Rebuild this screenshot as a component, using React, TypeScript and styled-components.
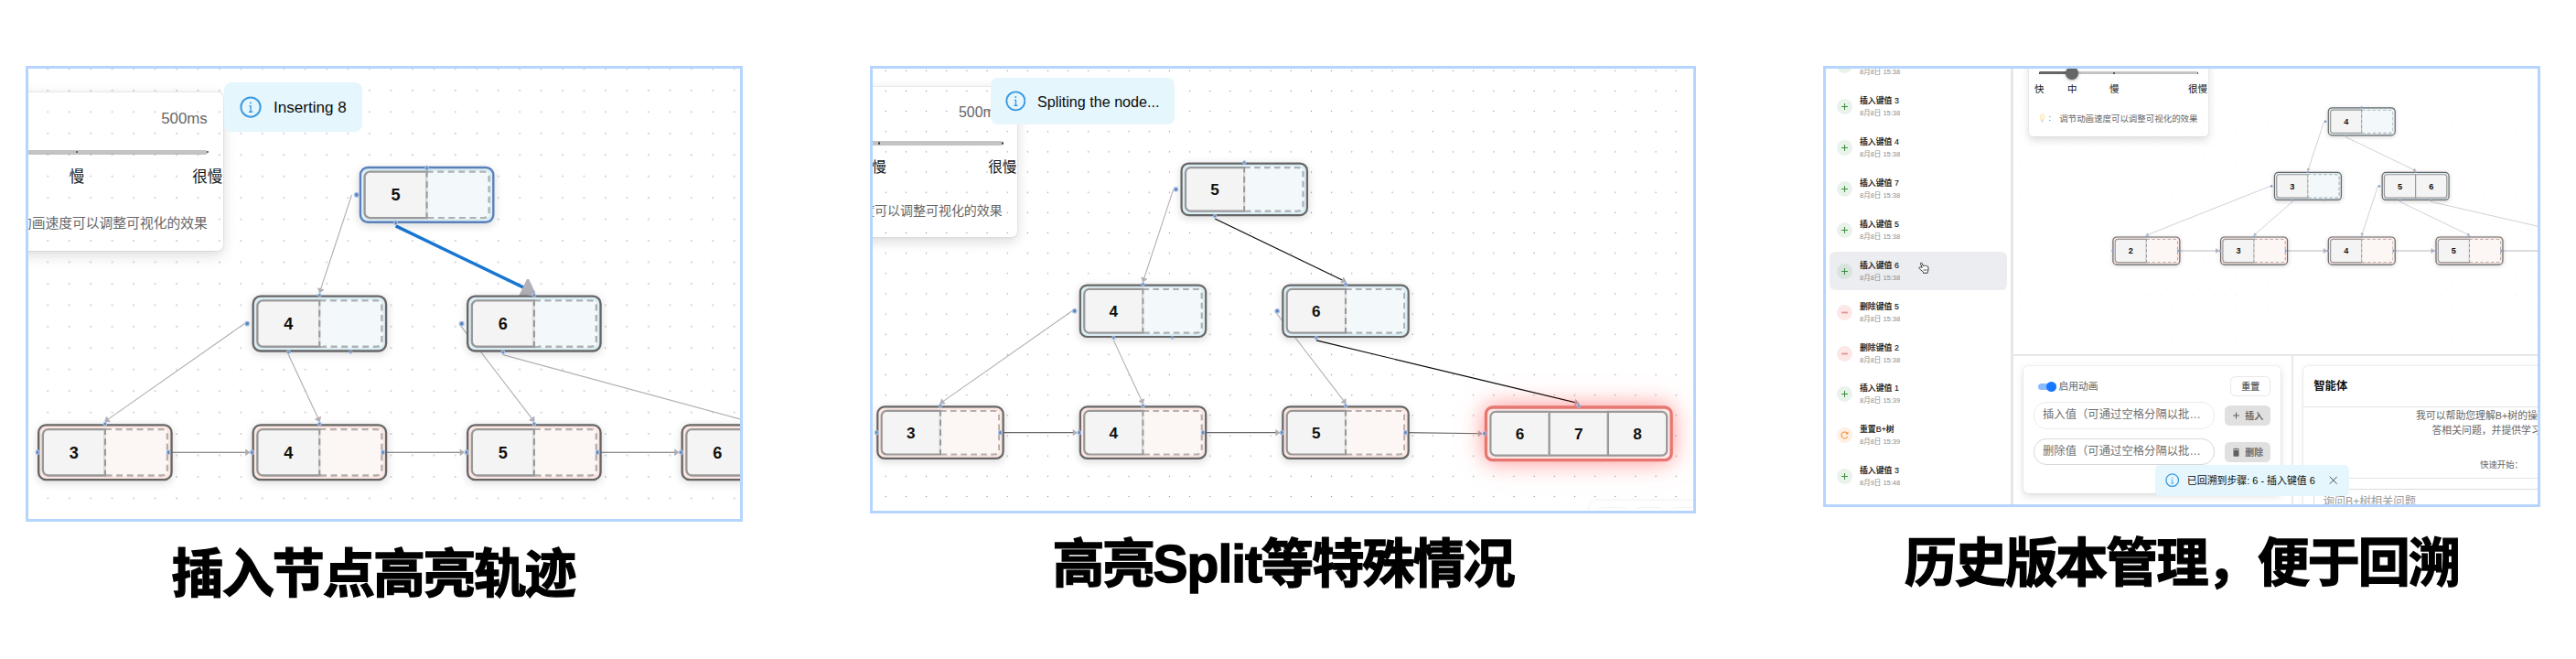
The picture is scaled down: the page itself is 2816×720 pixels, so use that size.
import React from "react";
import styled, { createGlobalStyle, css } from "styled-components";

const GlobalStyle = createGlobalStyle`
  *, *::before, *::after { box-sizing: border-box; }
  body {
    margin: 0;
    background: #fff;
    font-family: "Liberation Sans", "Noto Sans CJK SC", sans-serif;
    color: #111;
  }
`;

/* ---------- page ---------- */

const Page = styled.main`
  display: flex;
  align-items: flex-start;
  gap: 139px;
  width: 2816px;
  height: 720px;
  padding: 72px 0 0 28px;
  overflow: hidden;
  background: #fff;
`;

const Figure = styled.figure`
  display: flex;
  flex-direction: column;
  margin: 0;
`;

const Frame = styled.div<{ $w: number; $h: number }>`
  position: relative;
  width: ${(p) => p.$w}px;
  height: ${(p) => p.$h}px;
  border: 3px solid #b5d5ff;
  background: #fff;
  overflow: hidden;
`;

const Caption = styled.figcaption<{ $shift?: number; $top: number }>`
  margin-top: ${(p) => p.$top}px;
  padding-right: ${(p) => p.$shift ?? 0}px;
  text-align: center;
  white-space: nowrap;
  font-size: 57px;
  line-height: 80px;
  font-weight: 700;
  letter-spacing: -1.9px;
  color: #000;
  -webkit-text-stroke: 1.4px #000;
`;

const Latin = styled.span`
  letter-spacing: -1px;
`;

/* ---------- tree canvas ---------- */

const Canvas = styled.div`
  position: relative;
  width: 100%;
  height: 100%;
  overflow: hidden;
`;

const Layer = styled.svg`
  position: absolute;
  inset: 0;
  width: 100%;
  height: 100%;
`;

const Viewport = styled.div<{ $x: number; $y: number; $zoom: number }>`
  position: absolute;
  left: 0;
  top: 0;
  transform-origin: 0 0;
  transform: translate(${(p) => p.$x}px, ${(p) => p.$y}px) scale(${(p) => p.$zoom});
`;

const EdgeLayer = styled.svg`
  position: absolute;
  left: 0;
  top: 0;
  width: 1px;
  height: 1px;
  overflow: visible;
`;

type Kind = "internal" | "leaf";
type Mark = "selected" | "alert";

const NodeBox = styled.div<{ $x: number; $y: number; $kind: Kind; $mark?: Mark }>`
  position: absolute;
  left: ${(p) => p.$x}px;
  top: ${(p) => p.$y}px;
  display: flex;
  padding: 2px;
  border: 2px solid #666;
  border-radius: 8px;
  background: ${(p) => (p.$kind === "leaf" ? "#fce6e1" : "#dceef5")};
  box-shadow: 0 2px 8px rgba(0, 0, 0, 0.14);
  ${(p) => p.$mark === "selected" && css`border-color: #5a80ba;`}
  ${(p) =>
    p.$mark === "alert" &&
    css`
      border: 3px solid #e57670;
      background: #ffe6e6;
      box-shadow: 0 0 20px rgba(255, 0, 0, 0.33), 0 0 34px rgba(255, 90, 80, 0.2);
    `}
`;

const Cell = styled.div<{ $empty: boolean }>`
  display: flex;
  align-items: center;
  justify-content: center;
  width: 60px;
  height: 45px;
  border: 2px solid #999;
  background: #f4f4f4;
  font-size: 15.5px;
  font-weight: 700;
  color: #111;
  &:not(:first-child) { margin-left: -2px; }
  &:first-child { border-radius: 6px 0 0 6px; }
  &:last-child { border-radius: 0 6px 6px 0; }
  ${(p) => p.$empty && css`
    border-style: dashed;
    background: #fdfdfd;
    opacity: 0.7;
  `}
`;

const Handle = styled.i<{ $x: number; $y: number; $faint?: boolean }>`
  position: absolute;
  left: ${(p) => p.$x - 2.4}px;
  top: ${(p) => p.$y - 2.4}px;
  width: 4.8px;
  height: 4.8px;
  border: 0.9px solid #a9c3ea;
  border-radius: 50%;
  background: #5f83b4;
  opacity: ${(p) => (p.$faint ? 0.65 : 1)};
`;

interface TreeNode {
  id: string;
  x: number;
  y: number;
  kind: Kind;
  keys: string[];
  mark?: Mark;
  spare?: boolean;
}

/* slot: "left" | "right" or index of the key whose child pointer is used */
interface TreeEdge {
  from: string;
  slot: "left" | "right" | number;
  to: string;
  color?: string;
  width?: number;
}

const nodeWidth = (n: TreeNode) =>
  (n.mark === "alert" ? 10 : 8) + 2 + 58 * Math.max(2, n.keys.length);

const middle = (n: TreeNode) => (n.mark === "alert" ? 27.5 : 26.5);

function handlesOf(n: TreeNode) {
  const w = nodeWidth(n);
  const inset = n.mark === "selected" ? 1.6 : 0;
  const list: { x: number; y: number; faint?: boolean }[] = [{ x: w / 2, y: inset }];
  if (n.kind === "leaf") {
    list.push({ x: 0, y: middle(n) });
    if (n.mark !== "alert") list.push({ x: w - 4, y: middle(n) });
  } else {
    list.push({ x: -4.3 + inset, y: middle(n) });
    n.keys.forEach((_, i) => list.push({ x: 34 + 58 * i, y: 53 - inset / 2 }));
    if (n.spare) list.push({ x: 92, y: 53, faint: true });
  }
  return list;
}

function edgePath(e: TreeEdge, nodes: TreeNode[]) {
  const a = nodes.find((n) => n.id === e.from)!;
  const b = nodes.find((n) => n.id === e.to)!;
  let sx: number, sy: number;
  if (e.slot === "left") [sx, sy] = [a.x - 7, a.y + middle(a)];
  else if (e.slot === "right") [sx, sy] = [a.x + 122, a.y + middle(a)];
  else [sx, sy] = [a.x + 34 + 58 * e.slot, a.y + 55.5];
  const [tx, ty] =
    e.slot === "right" ? [b.x - 2.4, b.y + middle(b)] : [b.x + nodeWidth(b) / 2, b.y - 2.4];
  return `M${sx} ${sy}L${tx} ${ty}`;
}

interface TreeProps {
  id: string;
  x: number;
  y: number;
  zoom: number;
  dotX: number;
  dotY: number;
  nodes: TreeNode[];
  edges: TreeEdge[];
  dotAlpha?: number;
}

function Dots({ id, zoom, dotX, dotY, dotAlpha = 1 }: Pick<TreeProps, "id" | "zoom" | "dotX" | "dotY" | "dotAlpha">) {
  const step = 20 * zoom;
  return (
    <Layer>
      <defs>
        <pattern id={`dots-${id}`} x={dotX - step / 2} y={dotY - step / 2} width={step} height={step} patternUnits="userSpaceOnUse">
          <circle cx={step / 2} cy={step / 2} r={0.55 * zoom} fill="#8a8a92" opacity={dotAlpha} />
        </pattern>
      </defs>
      <rect width="100%" height="100%" fill={`url(#dots-${id})`} />
    </Layer>
  );
}

function Tree(props: TreeProps) {
  const { id, x, y, zoom, nodes, edges } = props;
  return (
    <>
      <Dots {...props} />
      <Viewport $x={x} $y={y} $zoom={zoom}>
        <EdgeLayer>
          <defs>
            <marker id={`arrow-${id}`} markerWidth="14" markerHeight="14" viewBox="-10 -10 20 20" orient="auto" refX="0" refY="0">
              <polyline points="-5,-4 0,0 -5,4 -5,-4" fill="#b1b1b7" stroke="#b1b1b7" strokeLinejoin="round" />
            </marker>
          </defs>
          {edges.map((e) => (
            <path
              key={`${e.from}-${e.slot}`}
              d={edgePath(e, nodes)}
              stroke={e.color ?? "#b1b1b7"}
              strokeWidth={e.width ?? 1}
              fill="none"
              markerEnd={`url(#arrow-${id})`}
            />
          ))}
        </EdgeLayer>
        {nodes.map((n) => (
          <NodeBox key={n.id} $x={n.x} $y={n.y} $kind={n.kind} $mark={n.mark}>
            {Array.from({ length: Math.max(2, n.keys.length) }, (_, i) => (
              <Cell key={i} $empty={n.keys[i] === undefined}>{n.keys[i]}</Cell>
            ))}
          </NodeBox>
        ))}
        {nodes.flatMap((n) =>
          handlesOf(n).map((h, i) => (
            <Handle key={`${n.id}-${i}`} $x={n.x + h.x} $y={n.y + h.y} $faint={h.faint} />
          ))
        )}
      </Viewport>
    </>
  );
}

/* ---------- floating speed card and toast, sized in em ---------- */

const SpeedCard = styled.section<{ $unit: number; $right: number; $top: number }>`
  position: absolute;
  left: ${(p) => p.$right - 248 * p.$unit}px;
  top: ${(p) => p.$top}px;
  font-size: ${(p) => p.$unit * 10}px;
  width: 24.8em;
  height: 14.1em;
  padding: 1.5em 1.42em 0;
  border-radius: 0.5em;
  background: #fff;
  box-shadow: 0 0 0.15em rgba(0, 0, 0, 0.22), 0 0.4em 1.2em rgba(0, 0, 0, 0.14);
`;

const SpeedHead = styled.div`
  display: flex;
  justify-content: flex-end;
  height: 1.8em;
  color: #666;
  span { font-size: 1.37em; line-height: 1.35em; }
`;

const Slider = styled.div`
  position: relative;
  height: 0.4em;
  margin-top: 1.83em;
  border-radius: 0.2em;
  background: #c3c3c3;
`;

const SliderFill = styled.div`
  width: 20.8%;
  height: 100%;
  border-radius: 0.2em;
  background: #666;
`;

const SliderTick = styled.i<{ $at: number }>`
  position: absolute;
  left: ${(p) => p.$at}%;
  top: 0.1em;
  width: 0.2em;
  height: 0.2em;
  margin-left: -0.1em;
  border-radius: 50%;
  background: #444;
`;

const SliderThumb = styled.i`
  position: absolute;
  left: 20.8%;
  top: 50%;
  width: 1.75em;
  height: 1.75em;
  margin: -0.87em;
  border-radius: 50%;
  background: #666;
  box-shadow: 0 0.1em 0.4em rgba(0, 0, 0, 0.35);
`;

const SliderLabel = styled.span<{ $at: number }>`
  position: absolute;
  left: ${(p) => p.$at}%;
  top: 1.1em;
  transform: translateX(-50%);
  font-size: 1.34em;
  line-height: 1.5em;
  white-space: nowrap;
  color: #111;
`;

const Hint = styled.p`
  display: flex;
  align-items: center;
  justify-content: flex-end;
  margin: 5.06em 0 0;
  height: 1.9em;
  color: #666;
  white-space: nowrap;
  svg { width: 1em; height: 1.3em; margin-right: 0.4em; }
  span { font-size: 1.2em; }
`;

const HintColon = styled.span`
  width: 1.4em;
`;

const Toast = styled.div<{ $unit: number; $x: number; $y: number; $w: number }>`
  position: absolute;
  left: ${(p) => p.$x}px;
  top: ${(p) => p.$y}px;
  width: ${(p) => p.$w}px;
  display: flex;
  align-items: center;
  font-size: ${(p) => p.$unit * 10}px;
  height: 4.35em;
  padding: 0 1.35em;
  border-radius: 0.65em;
  background: #e5f6fd;
  color: #0b0b0b;
  white-space: nowrap;
  > span { margin-left: 0.78em; font-size: 1.385em; line-height: 1.4em; padding-top: 0.1em; }
`;

const InfoGlyph = styled.svg`
  flex: none;
  width: 1.95em;
  height: 1.95em;
`;

const CloseGlyph = styled.svg`
  margin-left: auto;
  margin-right: 0.25em;
  width: 1.2em;
  height: 1.2em;
`;

const InfoIcon = () => (
  <InfoGlyph viewBox="0 0 24 24" fill="none" stroke="#3d9be0">
    <circle cx="12" cy="12" r="10.6" strokeWidth="2" />
    <path d="M12 6.400v2M10.500 11h1.600v6.200M10 17.200h4.200" strokeWidth="1.400" />
  </InfoGlyph>
);

const allMarks: [string, number][] = [["快", 0], ["中", 20.8], ["慢", 47.3], ["很慢", 100]];

interface SpeedPanelProps {
  unit: number;
  right: number;
  top: number;
  marks?: [string, number][];
  hint?: string;
}

function SpeedPanel({ unit, right, top, marks = allMarks, hint }: SpeedPanelProps) {
  return (
    <SpeedCard $unit={unit} $right={right} $top={top}>
      <SpeedHead>{hint && <span>500ms</span>}</SpeedHead>
      <Slider>
        <SliderFill />
        {marks.map(([label, at]) => (
          <React.Fragment key={label}>
            <SliderTick $at={at} />
            <SliderLabel $at={at}>{label}</SliderLabel>
          </React.Fragment>
        ))}
        <SliderThumb />
      </Slider>
      <Hint>
        {!hint && (
          <>
            <svg viewBox="0 0 10 13">
              <path d="M5 .8a3.600 3.600 0 0 0-3.600 3.700c0 2 1.600 2.400 1.800 4.500h3.600c.2-2.100 1.800-2.500 1.800-4.500A3.600 3.600 0 0 0 5 .8z" fill="#fff6d6" stroke="#f6dd94" strokeWidth=".9" />
              <path d="M3.500 10.100h3M3.900 11.800h2.200" stroke="#b9b9b4" strokeWidth="1" />
            </svg>
            <HintColon>:</HintColon>
          </>
        )}
        <span>{hint ?? "调节动画速度可以调整可视化的效果"}</span>
      </Hint>
    </SpeedCard>
  );
}

const Controls = styled.div`
  position: absolute;
  left: 784px;
  top: 471.5px;
  display: flex;
  gap: 5px;
  width: 160px;
  height: 50px;
  padding: 7px;
  border-radius: 8px;
  background: #fff;
  box-shadow: 0 0 4px rgba(0, 0, 0, 0.09);
  i {
    width: 35px;
    height: 35px;
    border: 1px solid #f4f4f4;
    border-radius: 7px;
  }
`;

/* ---------- workbench (third figure) ---------- */

const Workbench = styled.div`
  display: flex;
  height: 100%;
`;

const Sidebar = styled.aside`
  flex: none;
  display: flex;
  flex-direction: column;
  gap: 2.93px;
  width: 205px;
  height: 476px;
  padding: 0 4.3px 0 4px;
  border-right: 3px solid #e7e7e7;
  overflow: hidden;
`;

const HistoryItem = styled.div<{ $active?: boolean; $first?: boolean }>`
  flex: none;
  display: flex;
  align-items: center;
  gap: 8px;
  height: 42px;
  margin-top: ${(p) => (p.$first ? -24.4 : 0)}px;
  padding-left: 8px;
  border-radius: 6px;
  background: ${(p) => (p.$active ? "#ecedf1" : "transparent")};
`;

type Action = "insert" | "remove" | "reset";
const tone: Record<Action, [string, string]> = {
  insert: ["#388e3c", "rgba(56,142,60,.11)"],
  remove: ["#ea9393", "#fde8e8"],
  reset: ["#f0913c", "#fef0e4"],
};

const Badge = styled.span<{ $action: Action }>`
  display: grid;
  place-items: center;
  width: 17px;
  height: 17px;
  border-radius: 50%;
  background: ${(p) => tone[p.$action][1]};
  svg { width: 11px; height: 11px; }
`;

const ItemText = styled.div`
  display: flex;
  flex-direction: column;
  white-space: nowrap;
  strong { font-size: 8.9px; line-height: 14px; font-weight: 500; color: #111; -webkit-text-stroke: 0.12px #111; }
  small { font-size: 7.5px; line-height: 13px; color: #8c8c8c; }
`;

const HandCursor = styled.svg`
  width: 12px;
  height: 13px;
  margin: -8px 0 0 12px;
`;

const MainColumn = styled.div`
  flex: none;
  display: flex;
  flex-direction: column;
  width: 573px;
`;

const CanvasPane = styled.div`
  flex: none;
  height: 314px;
  border-bottom: 2px solid #e7e7e7;
`;

const BottomPane = styled.div`
  display: flex;
  height: 162px;
  overflow: hidden;
`;

const FormPane = styled.div`
  flex: none;
  width: 306px;
  padding: 11.3px 0 0 10.7px;
  border-right: 2px solid #e9e9e9;
`;

const FormCard = styled.div`
  width: 281.6px;
  height: 138.7px;
  padding: 10.7px 11.3px;
  border-radius: 5px;
  background: #fff;
  box-shadow: 0 0 1.5px rgba(0, 0, 0, 0.2), 0 3px 9px rgba(0, 0, 0, 0.13);
`;

const FormRow = styled.div<{ $top?: number }>`
  display: flex;
  align-items: center;
  justify-content: space-between;
  margin-top: ${(p) => p.$top ?? 0}px;
`;

const SwitchLabel = styled.label`
  display: flex;
  align-items: center;
  gap: 2.5px;
  padding-left: 5px;
  font-size: 10.8px;
  line-height: 16px;
  color: #666;
`;

const Switch = styled.span`
  display: flex;
  align-items: center;
  justify-content: flex-end;
  width: 20px;
  height: 7px;
  border-radius: 4px;
  background: #8bbaff;
  &::after {
    content: "";
    width: 11px;
    height: 11px;
    border-radius: 50%;
    background: #1677ff;
  }
`;

const Field = styled.div<{ $strong?: boolean }>`
  width: 198px;
  height: 29.4px;
  padding-left: 9px;
  border: 1px solid ${(p) => (p.$strong ? "#d8d8d8" : "#ebebeb")};
  border-radius: 14px;
  font-size: 12.35px;
  line-height: 27px;
  color: #707070;
  white-space: nowrap;
  overflow: hidden;
`;

const Button = styled.button<{ $outlined?: boolean }>`
  display: flex;
  align-items: center;
  justify-content: center;
  gap: 5.5px;
  width: ${(p) => (p.$outlined ? 43.7 : 50)}px;
  height: 22.3px;
  padding: 0;
  border: ${(p) => (p.$outlined ? "1px solid #e8e8e8" : "0")};
  border-radius: 5.5px;
  background: ${(p) => (p.$outlined ? "#fff" : "#e0e0e0")};
  font: 500 9.9px "Liberation Sans", "Noto Sans CJK SC", sans-serif;
  color: #606060;
  -webkit-text-stroke: 0.15px #606060;
  svg { width: 9px; height: 10px; }
`;

const AgentPane = styled.div`
  flex: 1;
  min-width: 0;
  padding: 10.5px 0 0 11px;
  overflow: hidden;
`;

const AgentCard = styled.div`
  width: 420px;
  height: 190px;
  border-radius: 5px 5px 0 0;
  background: #fff;
  box-shadow: 0 0 2px rgba(0, 0, 0, 0.22), 0 2px 6px rgba(0, 0, 0, 0.06);
`;

const AgentTitle = styled.h2`
  margin: 0;
  height: 45px;
  padding-left: 11.3px;
  border-bottom: 1px solid #e6e6e6;
  font-size: 12.3px;
  line-height: 45px;
`;

const AgentBody = styled.div`
  height: 78px;
  padding-top: 1.5px;
  border-bottom: 1px solid #e6e6e6;
  white-space: nowrap;
  color: #666;
`;

const AgentLine = styled.p<{ $indent: number; $small?: boolean }>`
  margin: ${(p) => (p.$small ? "21px 0 0" : "0")};
  padding-left: ${(p) => p.$indent}px;
  font-size: ${(p) => (p.$small ? 9.4 : 10.85)}px;
  line-height: 16.4px;
`;

const AskBox = styled.div`
  margin: 11px 0 0 11px;
  height: 40px;
  padding-left: 9.5px;
  border: 1px solid #dcdcdc;
  font-size: 12.3px;
  line-height: 26px;
  color: #9a9a9a;
`;

const history: { action: Action; title: string; time: string; active?: boolean }[] = [
  { action: "insert", title: "", time: "8月8日 15:38" },
  { action: "insert", title: "插入键值 3", time: "8月8日 15:38" },
  { action: "insert", title: "插入键值 4", time: "8月8日 15:38" },
  { action: "insert", title: "插入键值 7", time: "8月8日 15:38" },
  { action: "insert", title: "插入键值 5", time: "8月8日 15:38" },
  { action: "insert", title: "插入键值 6", time: "8月8日 15:38", active: true },
  { action: "remove", title: "删除键值 5", time: "8月8日 15:38" },
  { action: "remove", title: "删除键值 2", time: "8月8日 15:38" },
  { action: "insert", title: "插入键值 1", time: "8月8日 15:39" },
  { action: "reset", title: "重置B+树", time: "8月8日 15:39" },
  { action: "insert", title: "插入键值 3", time: "8月9日 15:48" },
];

const ActionIcon = ({ action }: { action: Action }) => (
  <svg viewBox="0 0 24 24" fill="none" stroke={tone[action][0]} strokeWidth={action === "remove" ? 4 : 2.2}>
    {action === "insert" && <path d="M12 4.5v15M4.5 12h15" />}
    {action === "remove" && <path d="M4.5 12h15" />}
    {action === "reset" && (
      <>
        <path d="M19 15.500A7.800 7.800 0 1 1 17.800 6.600" />
        <path d="M20.500 3.500v6.500H14z" fill={tone.reset[0]} stroke="none" />
      </>
    )}
  </svg>
);

/* ---------- data ---------- */

const chain = "#686868";

const insertNodes: TreeNode[] = [
  { id: "root", x: 300, y: 0, kind: "internal", keys: ["5"], mark: "selected" },
  { id: "i4", x: 200, y: 120, kind: "internal", keys: ["4"], spare: true },
  { id: "i6", x: 400, y: 120, kind: "internal", keys: ["6"] },
  { id: "l3", x: 0, y: 240, kind: "leaf", keys: ["3"] },
  { id: "l4", x: 200, y: 240, kind: "leaf", keys: ["4"] },
  { id: "l5", x: 400, y: 240, kind: "leaf", keys: ["5"] },
  { id: "l6", x: 600, y: 240, kind: "leaf", keys: ["6"] },
];

const insertEdges: TreeEdge[] = [
  { from: "root", slot: "left", to: "i4" },
  { from: "root", slot: 0, to: "i6", color: "#1976d2", width: 3 },
  { from: "i4", slot: "left", to: "l3" },
  { from: "i4", slot: 0, to: "l4" },
  { from: "i6", slot: "left", to: "l5" },
  { from: "i6", slot: 0, to: "l6" },
  { from: "l3", slot: "right", to: "l4", color: chain },
  { from: "l4", slot: "right", to: "l5", color: chain },
  { from: "l5", slot: "right", to: "l6", color: chain },
];

const splitNodes: TreeNode[] = insertNodes.map((n) =>
  n.id === "root"
    ? { ...n, mark: undefined }
    : n.id === "l6"
      ? { ...n, keys: ["6", "7", "8"], mark: "alert" }
      : n
);

const splitEdges: TreeEdge[] = insertEdges.map((e) =>
  (e.from === "root" || e.from === "i6") && e.slot === 0 ? { ...e, color: "#0a0a0a", width: 1.05 } : e
);

const historyNodes: TreeNode[] = [
  { id: "root", x: 400, y: 0, kind: "internal", keys: ["4"] },
  { id: "i3", x: 300, y: 120, kind: "internal", keys: ["3"], spare: true },
  { id: "i5", x: 500, y: 120, kind: "internal", keys: ["5", "6"] },
  { id: "l2", x: 0, y: 240, kind: "leaf", keys: ["2"] },
  { id: "l3", x: 200, y: 240, kind: "leaf", keys: ["3"] },
  { id: "l4", x: 400, y: 240, kind: "leaf", keys: ["4"] },
  { id: "l5", x: 600, y: 240, kind: "leaf", keys: ["5"] },
  { id: "l6", x: 800, y: 240, kind: "leaf", keys: [] },
];

const historyEdges: TreeEdge[] = [
  { from: "root", slot: "left", to: "i3" },
  { from: "root", slot: 0, to: "i5" },
  { from: "i3", slot: "left", to: "l2" },
  { from: "i3", slot: 0, to: "l3" },
  { from: "i5", slot: "left", to: "l4" },
  { from: "i5", slot: 0, to: "l5" },
  { from: "i5", slot: 1, to: "l6" },
  { from: "l2", slot: "right", to: "l3", width: 1.5 },
  { from: "l3", slot: "right", to: "l4", width: 1.5 },
  { from: "l4", slot: "right", to: "l5", width: 1.5 },
  { from: "l5", slot: "right", to: "l6", width: 1.5 },
];

export default function App() {
  return (
    <>
      <GlobalStyle />
      <Page>
        <Figure>
          <Frame $w={784} $h={498}>
            <Canvas>
              <SpeedPanel unit={1.2333} right={213.3} top={25.5} marks={allMarks.slice(2)} hint="动画速度可以调整可视化的效果" />
              <Tree id="a" x={10} y={106.8} zoom={1.1725} dotX={21.3} dotY={0.4} nodes={insertNodes} edges={insertEdges} />
              <Toast $unit={1.2333} $x={214} $y={15} $w={150.7}>
                <InfoIcon /><span>Inserting 8</span>
              </Toast>
            </Canvas>
          </Frame>
          <Caption $top={17} $shift={24}>插入节点高亮轨迹</Caption>
        </Figure>

        <Figure>
          <Frame $w={903} $h={489}>
            <Canvas>
              <SpeedPanel unit={1.1642} right={158.3} top={19.5} marks={allMarks.slice(2)} hint="度可以调整可视化的效果" />
              <Tree id="b" x={4.2} y={102.5} zoom={1.1076} dotX={14.3} dotY={2.3} nodes={splitNodes} edges={splitEdges} />
              <Controls><i /><i /><i /></Controls>
              <Toast $unit={1.1642} $x={129} $y={10} $w={201}>
                <InfoIcon /><span>Spliting the node...</span>
              </Toast>
            </Canvas>
          </Frame>
          <Caption $top={15}>高亮<Latin>Split</Latin>等特殊情况</Caption>
        </Figure>

        <Figure>
          <Frame $w={784} $h={482}>
            <Workbench>
              <Sidebar>
                {history.map((h, i) => (
                  <HistoryItem key={i} $active={h.active} $first={i === 0}>
                    <Badge $action={h.action}><ActionIcon action={h.action} /></Badge>
                    <ItemText><strong>{h.title || "\u00a0"}</strong><small>{h.time}</small></ItemText>
                    {h.active && (
                      <HandCursor viewBox="0 0 24 26" fill="#fff" stroke="#333" strokeWidth="2" strokeLinejoin="round">
                        <path d="M8.5 13 5 4.5C4 2 7 1 8 3.200l3 6c1-1.500 3-1.300 3.500 0 1-1.200 3-.8 3.500.6 1.500-.8 3.500 0 3.800 2V18c0 2-1 3-1.500 4.500v2H11v-2L4.500 17C2 14.500 1 13 2.500 12s3.500 0 6 1z" />
                        <path d="M12 16v4M15 16v4M18 16v4" strokeWidth="1.200" />
                      </HandCursor>
                    )}
                  </HistoryItem>
                ))}
              </Sidebar>
              <MainColumn>
                <CanvasPane>
                  <Canvas>
                    <SpeedPanel unit={0.7885} right={212.7} top={-37.2} />
                    <Tree id="c" x={108.3} y={42.2} zoom={0.5885} dotX={8} dotY={11.67} dotAlpha={0.8} nodes={historyNodes} edges={historyEdges} />
                  </Canvas>
                </CanvasPane>
                <BottomPane>
                  <FormPane>
                    <FormCard>
                      <FormRow>
                        <SwitchLabel><Switch />启用动画</SwitchLabel>
                        <Button $outlined>重置</Button>
                      </FormRow>
                      <FormRow $top={6}>
                        <Field>插入值（可通过空格分隔以批…</Field>
                        <Button>
                          <svg viewBox="0 0 18 20"><path d="M9 3v14M2 10h14" stroke="#606060" strokeWidth="2" /></svg>
                          插入
                        </Button>
                      </FormRow>
                      <FormRow $top={10.3}>
                        <Field $strong>删除值（可通过空格分隔以批…</Field>
                        <Button>
                          <svg viewBox="0 0 18 20" fill="#606060" stroke="none"><path d="M3 6h12v11.500a2 2 0 0 1-2 2H5a2 2 0 0 1-2-2zM2 2.500h4l1-1.200h4l1 1.200h4V4.700H2z" /></svg>
                          删除
                        </Button>
                      </FormRow>
                    </FormCard>
                  </FormPane>
                  <AgentPane>
                    <AgentCard>
                      <AgentTitle>智能体</AgentTitle>
                      <AgentBody>
                        <AgentLine $indent={123}>我可以帮助您理解B+树的操作</AgentLine>
                        <AgentLine $indent={140.5}>答相关问题，并提供学习</AgentLine>
                        <AgentLine $indent={193} $small>快速开始：</AgentLine>
                      </AgentBody>
                      <AskBox>询问B+树相关问题</AskBox>
                    </AgentCard>
                  </AgentPane>
                </BottomPane>
              </MainColumn>
            </Workbench>
            <Toast $unit={0.7885} $x={360.3} $y={432.7} $w={211.4}>
              <InfoIcon /><span>已回溯到步骤: 6 - 插入键值 6</span>
              <CloseGlyph viewBox="0 0 12 12" stroke="#333" strokeWidth="1.100"><path d="M1 1l10 10M11 1L1 11" /></CloseGlyph>
            </Toast>
          </Frame>
          <Caption $top={21}>历史版本管理，便于回溯</Caption>
        </Figure>
      </Page>
    </>
  );
}
